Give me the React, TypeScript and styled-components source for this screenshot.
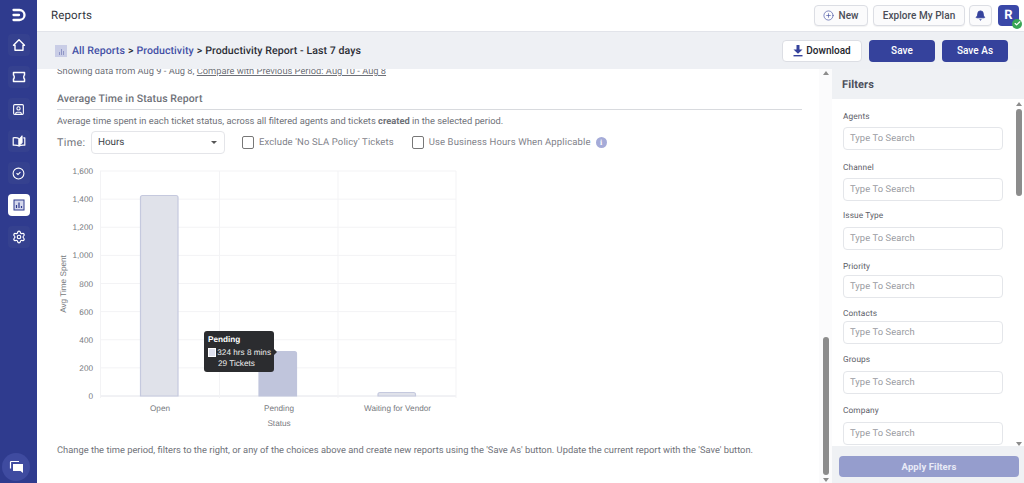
import React from "react";
import styled, { createGlobalStyle } from "styled-components";
import { SquareUser, CircleCheck, Settings, CirclePlus, Bell, Check } from "lucide-react";

const Global = createGlobalStyle`
  html, body { margin: 0; padding: 0; height: 100%; overflow: hidden; background: #fff; }
  * { box-sizing: border-box; }
  body { font-family: Roboto, "Liberation Sans", sans-serif; text-rendering: geometricPrecision; }
`;
const Page = styled.div`display: flex; width: 1024px; height: 483px; overflow: hidden;`;
const Sidebar = styled.nav`
  width: 37px; flex: none; background: #2f3b8e; display: flex; flex-direction: column; align-items: center;
  padding-top: 3px; position: relative;
`;
const Logo = styled.div`height: 23px; display: flex; align-items: center; justify-content: center; margin-bottom: 8px; color: #fff;`;
const NavButton = styled.div<{ $active?: boolean }>`
  width: 22px; height: 22px; border-radius: 4px; margin-bottom: 10px;
  display: flex; align-items: center; justify-content: center;
  background: ${p => (p.$active ? "#fff" : "#35418f")};
  color: ${p => (p.$active ? "#2f3b8e" : "#fff")};
`;
const ChatBubble = styled.div`
  width: 28px; height: 28px; border-radius: 50%; background: #3f4ba0; position: absolute; left: 2px; bottom: 2px;
  display: flex; align-items: center; justify-content: center;
`;
const Body = styled.div`flex: 1; min-width: 0; display: flex; flex-direction: column;`;
const TopBar = styled.header`
  height: 32px; flex: none; display: flex; align-items: center; justify-content: space-between;
  padding: 0 5px 1px 14px; border-bottom: 1px solid #e2e4ea; background: #fff;
`;
const PageName = styled.div`font-size: 11.5px; color: #33363d; letter-spacing: .15px;`;
const TopActions = styled.div`display: flex; align-items: center; gap: 4px;`;
const OutlineButton = styled.button<{ $w: number; $mr?: number }>`
  width: ${p => p.$w}px; height: 21px; border: 1px solid #dcdee4; border-radius: 4px; background: #fbfbfc;
  margin-right: ${p => p.$mr ?? 0}px;
  display: flex; align-items: center; justify-content: center; gap: 4px; padding: 0;
  font: 500 10px Roboto, sans-serif; color: #4a4d57; letter-spacing: .05px; box-shadow: 0 1px 1px #0000000d;
`;
const Avatar = styled.div`
  width: 21px; height: 21px; border-radius: 4px; background: #3a48a8; color: #fff; position: relative; margin-left: 2px;
  font: 700 13px Roboto, sans-serif; display: flex; align-items: center; justify-content: center;
`;
const OnlineBadge = styled.span`
  position: absolute; right: -3px; bottom: -3px; width: 10px; height: 10px; border-radius: 50%; background: #3aa655; color: #fff;
  display: flex; align-items: center; justify-content: center;
`;
const CrumbBar = styled.div`
  height: 37px; flex: none; background: #eef0f4; display: flex; align-items: center; justify-content: space-between;
  padding: 0 16px 0 18px; position: relative; z-index: 1;
`;
const Crumbs = styled.div`display: flex; align-items: center; font: 500 10.6px Roboto, sans-serif; color: #2c2e36; letter-spacing: .05px;`;
const CrumbIcon = styled.span`
  width: 12px; height: 12px; margin-right: 5px; background: #c9cde6; display: flex; align-items: flex-end; justify-content: center; gap: 1px; padding-bottom: 2px;
`;
const CrumbTick = styled.i<{ $h: number }>`display: block; width: 1px; height: ${p => p.$h}px; background: #8f96c6;`;
const CrumbLink = styled.span`color: #4450a6;`;
const CrumbSep = styled.span`margin: 0 3px;`;
const CrumbActions = styled.div`display: flex; gap: 7px; align-items: center;`;
const DownloadButton = styled.button`
  width: 80px; height: 22px; border: 1px solid #dcdee4; border-radius: 4px; background: #fff; padding: 0;
  font: 500 10px Roboto, sans-serif; color: #23252c; display: flex; align-items: center; justify-content: center; gap: 3px;
`;
const PrimaryButton = styled.button`
  width: 66px; height: 22px; border: none; border-radius: 4px; background: #35429c; color: #fff; padding: 0;
  font: 500 10px Roboto, sans-serif; letter-spacing: .05px;
`;
const Work = styled.div`flex: 1; min-height: 0; display: flex;`;
const Main = styled.main`flex: 1; min-width: 0; overflow: hidden; padding: 0 0 0 20px;`;
const DateLine = styled.div`margin-top: -3px; font-size: 9.3px; line-height: 12px; color: #6d7078;`;
const Underlined = styled.span`text-decoration: underline;`;
const SectionTitle = styled.h2`
  margin: 14px 0 0; width: 745px; height: 18px; font: 500 10.5px Roboto, sans-serif; line-height: 14px; color: #6f7279; letter-spacing: .1px;
  border-bottom: 1px solid #d8dade;
`;
const Description = styled.p`margin: 5px 0 0; font-size: 9.34px; line-height: 13px; color: #6f7279;`;
const Controls = styled.div`display: flex; align-items: center; margin-top: 3px; height: 23px;`;
const TimeLabel = styled.span`font-size: 10.8px; color: #74777e; width: 34px; letter-spacing: .3px;`;
const Select = styled.div`
  width: 134px; height: 23px; border: 1px solid #e4e5e9; border-radius: 4px; display: flex; align-items: center; justify-content: space-between;
  padding: 0 6px; font-size: 9.8px; color: #3c3f47; margin-right: 17px;
`;
const Caret = styled.span`width: 0; height: 0; border: 3.5px solid transparent; border-top: 3.5px solid #555; border-bottom: 0; margin-right: 1px;`;
const CheckOption = styled.label<{ $gap: number }>`
  display: flex; align-items: center; gap: 5px; font-size: 9.5px; color: #7f828a; letter-spacing: .12px; margin-right: ${p => p.$gap}px;
`;
const CheckBox = styled.span`width: 12px; height: 13px; border: 1px solid #777; border-radius: 2px; background: #fff;`;
const InfoDot = styled.span`
  width: 11px; height: 11px; border-radius: 50%; background: #a5abd8; color: #fff; display: flex; align-items: center; justify-content: center;
  font: 700 8px/1 "Liberation Serif", serif;
`;
const ChartWrap = styled.div`position: relative; width: 420px; height: 280px; margin: 6px 0 0 -1px;`;
const ChartSvg = styled.svg`display: block; width: 420px; height: 280px;`;
const Tooltip = styled.div`
  position: absolute; left: 148px; top: 171px; width: 70px; height: 41px; border-radius: 3px; background: #2b2c2f; color: #eee;
  padding: 3px 3px 0 4px; font: 8.2px/11px "Liberation Sans", Arial, sans-serif;
  &::after { content: ""; position: absolute; right: -3px; top: 18px; border: 3px solid transparent; border-left-color: #2b2c2f; border-right: 0; }
`;
const TipTitle = styled.div`font-weight: 700; margin-bottom: 2px; color: #fff;`;
const TipRow = styled.div`display: flex; align-items: center; gap: 1px; white-space: nowrap;`;
const TipSwatch = styled.span`width: 9px; height: 9px; background: #dfe1ee; border: 1px solid #fff;`;
const TipSub = styled.div`padding-left: 10px;`;
const FootNote = styled.p`margin: 5px 0 0; font-size: 9.33px; line-height: 12px; color: #6f7279; white-space: nowrap;`;
const Bar = styled.div`
  width: 13px; flex: none; display: flex; flex-direction: column; align-items: center; justify-content: space-between;
  padding: 2px 0 1px; background: #fbfbfc; position: relative;
`;
const FilterBar = styled(Bar)`width: 9px; background: transparent; padding: 0;`;
const ArrowUp = styled.span`width: 0; height: 0; border: 3.5px solid transparent; border-top: 0; border-bottom: 4px solid #8c8c8c;`;
const ArrowDown = styled.span`width: 0; height: 0; border: 3.5px solid transparent; border-bottom: 0; border-top: 4px solid #8c8c8c;`;
const Track = styled.div`flex: 1; width: 100%; display: flex; flex-direction: column; align-items: center; padding: 3px 0;`;
const Thumb = styled.div<{ $h: number; $top?: boolean }>`
  width: 6px; height: ${p => p.$h}px; border-radius: 3px; background: #8c8c8c; margin-top: ${p => (p.$top ? "0" : "auto")};
`;
const Filters = styled.aside`width: 193px; flex: none; display: flex; flex-direction: column; border-left: 1px solid #e4e6ea; margin-left: -1px; background: #fff;`;
const FiltersHead = styled.div`height: 30px; flex: none; background: #eff1f4; padding: 0 10px; display: flex; align-items: center; font: 700 11px Roboto, sans-serif; color: #4c4f5b; letter-spacing: .1px;`;
const FiltersScroll = styled.div`flex: 1; min-height: 0; display: flex; padding: 3px 1px 0 11px; overflow: hidden;`;
const FilterList = styled.div`flex: 1; min-width: 0; padding-top: 10px;`;
const FilterField = styled.div<{ $mb: number }>`margin-bottom: ${p => p.$mb}px;`;
const FieldLabel = styled.div<{ $gap: number }>`font-size: 8.3px; line-height: 11px; color: #5d6068; margin-bottom: ${p => p.$gap}px; letter-spacing: .1px;`;
const SearchBox = styled.div`
  width: 160px; height: 23px; border: 1px solid #e4e6ea; border-radius: 4px; display: flex; align-items: center; padding-left: 6px;
  font-size: 9.4px; color: #999ba1; letter-spacing: .08px;
`;
const ApplyWrap = styled.div`height: 37px; flex: none; background: #eff1f4; padding: 9px 6px 0 7px;`;
const ApplyButton = styled.button`
  width: 180px; height: 21px; border: none; border-radius: 4px; background: #959dcd; color: #e9ebf7; padding: 0;
  font: 700 9.5px Roboto, sans-serif; letter-spacing: .1px;
`;

const filters: [string, number, number][] = [
  ["Agents", 4, 13], ["Channel", 4, 10], ["Issue Type", 5, 12], ["Priority", 2, 11], ["Contacts", 1, 11], ["Groups", 5, 12], ["Company", 5, 0],
];
const yTicks = [0, 200, 400, 600, 800, 1000, 1200, 1400, 1600];
const yOf = (v: number) => 396 - (v / 1600) * 225;

function Chart() {
  const label = { fontFamily: '"Liberation Sans", Arial, sans-serif', fontSize: 8.2, fill: "#777a80" } as const;
  const bars = [
    { x: 140.5, top: 195.5, fill: "#e0e2ea", stroke: "#c5c9de" },
    { x: 259, top: 351.5, fill: "#c0c5dc", stroke: "#c0c5dc" },
    { x: 378, top: 392.5, fill: "#e0e2ea", stroke: "#c5c9de" },
  ];
  return (
    <ChartSvg viewBox="56 160 420 280">
      {yTicks.map(v => (
        <g key={v}>
          <line x1={100} x2={456} y1={yOf(v)} y2={yOf(v)} stroke={v === 0 ? "#e3e4ea" : "#f3f3f5"} />
          <text {...label} x={93} y={yOf(v) + 3} textAnchor="end">{v.toLocaleString("en-US")}</text>
        </g>
      ))}
      {[100.5, 219.5, 338, 456].map(x => <line key={x} x1={x} x2={x} y1={171} y2={398} stroke="#f3f3f5" />)}
      {bars.map(b => (
        <path key={b.x} d={`M${b.x} 396V${b.top + 2}q0-2 2-2H${b.x + 35.5}q2 0 2 2V396z`} fill={b.fill} stroke={b.stroke} strokeWidth={1.2} />
      ))}
      <text {...label} x={160} y={411} textAnchor="middle">Open</text>
      <text {...label} x={279} y={411} textAnchor="middle">Pending</text>
      <text {...label} x={397.5} y={411} textAnchor="middle">Waiting for Vendor</text>
      <text {...label} x={279} y={426} textAnchor="middle">Status</text>
      <text {...label} transform="translate(66 284) rotate(-90)" textAnchor="middle">Avg Time Spent</text>
    </ChartSvg>
  );
}

export default function App() {
  return (
    <Page>
      <Global />
      <Sidebar>
        <Logo>
          <svg width="14" height="14" viewBox="0 0 14 14" fill="none">
            <path d="M1.5 2h6a5 5 0 0 1 0 10h-6" stroke="#fff" strokeWidth="2.3" strokeLinecap="round" />
            <path d="M1.5 7h5.5" stroke="#fff" strokeWidth="2.3" strokeLinecap="round" />
          </svg>
        </Logo>
        <NavButton>
          <svg width="14" height="14" viewBox="0 0 14 14" fill="none" stroke="#fff" strokeWidth="1.4" strokeLinejoin="round">
            <path d="M1.5 7.2 7 1.8l5.5 5.4H11v5H3v-5z" />
          </svg>
        </NavButton>
        <NavButton>
          <svg width="14" height="14" viewBox="0 0 14 14" fill="none" stroke="#fff" strokeWidth="1.5" strokeLinejoin="round">
            <path d="M1.5 2.5h11v2.6c-1 .4-1 3.4 0 3.8v2.6h-11V8.9c1-.4 1-3.4 0-3.8z" />
          </svg>
        </NavButton>
        <NavButton><SquareUser size={13} strokeWidth={2} /></NavButton>
        <NavButton>
          <svg width="14" height="14" viewBox="0 0 14 14" fill="none" stroke="#fff" strokeWidth="1.2" strokeLinejoin="round">
            <path d="M7 4.5C5.600 3.800 3.500 3.600 1.200 3.800v7.400c2.300-.2 4.400 0 5.800.8z" />
            <path d="M7 12c1.400-.8 3.500-1 5.800-.8V3.800h-1.500" />
            <path d="M7.200 11V5.500L10 2v6.500z" fill="#fff" />
          </svg>
        </NavButton>
        <NavButton><CircleCheck size={13} strokeWidth={2} /></NavButton>
        <NavButton $active>
          <svg width="12" height="12" viewBox="0 0 12 12" fill="none">
            <rect x="1" y="1" width="10" height="10" fill="#d5d8ec" stroke="#2f3b8e" />
            <path d="M3.500 9V6M6 9V3.500M8.500 9V7" stroke="#2f3b8e" strokeWidth="1.200" />
          </svg>
        </NavButton>
        <NavButton><Settings size={14} strokeWidth={2} /></NavButton>
        <ChatBubble>
          <svg width="15" height="14" viewBox="0 0 15 14" fill="none">
            <path d="M1.500 8.500V2.200c0-.4.3-.7.7-.7H10" stroke="#fff" strokeWidth="1.200" />
            <path d="M4 4h10v9l-2.500-2H4.600a.6.6 0 0 1-.6-.6z" fill="#fff" />
          </svg>
        </ChatBubble>
      </Sidebar>
      <Body>
        <TopBar>
          <PageName>Reports</PageName>
          <TopActions>
            <OutlineButton $w={54} $mr={1}><CirclePlus size={11} color="#3f4ba0" strokeWidth={1.4} />New</OutlineButton>
            <OutlineButton $w={92}>Explore My Plan</OutlineButton>
            <OutlineButton $w={23} aria-label="Notifications"><Bell size={11} color="#35429c" fill="#35429c" /></OutlineButton>
            <Avatar>R<OnlineBadge><Check size={7} strokeWidth={4} /></OnlineBadge></Avatar>
          </TopActions>
        </TopBar>
        <CrumbBar>
          <Crumbs>
            <CrumbIcon><CrumbTick $h={3} /><CrumbTick $h={6} /><CrumbTick $h={4} /></CrumbIcon>
            <CrumbLink>All Reports</CrumbLink>
            <CrumbSep>{">"}</CrumbSep>
            <CrumbLink>Productivity</CrumbLink>
            <CrumbSep>{">"}</CrumbSep>
            <span>Productivity Report - Last 7 days</span>
          </Crumbs>
          <CrumbActions>
            <DownloadButton>
              <svg width="10" height="12" viewBox="0 0 10 12" fill="#35429c">
                <path d="M3.500 0h3v4.500H9.500L5 8.800.5 4.500h3z" /><rect x="0.5" y="10" width="9" height="1.400" />
              </svg>
              Download
            </DownloadButton>
            <PrimaryButton>Save</PrimaryButton>
            <PrimaryButton>Save As</PrimaryButton>
          </CrumbActions>
        </CrumbBar>
        <Work>
          <Main>
            <DateLine>Showing data from Aug 9 - Aug 8, <Underlined>Compare with Previous Period: Aug 10 - Aug 8</Underlined></DateLine>
            <SectionTitle>Average Time in Status Report</SectionTitle>
            <Description>Average time spent in each ticket status, across all filtered agents and tickets <b>created</b> in the selected period.</Description>
            <Controls>
              <TimeLabel>Time:</TimeLabel>
              <Select>Hours<Caret /></Select>
              <CheckOption $gap={18}><CheckBox />Exclude 'No SLA Policy' Tickets</CheckOption>
              <CheckOption $gap={5}><CheckBox />Use Business Hours When Applicable</CheckOption>
              <InfoDot>i</InfoDot>
            </Controls>
            <ChartWrap>
              <Chart />
              <Tooltip>
                <TipTitle>Pending</TipTitle>
                <TipRow><TipSwatch />324 hrs 8 mins</TipRow>
                <TipSub>29 Tickets</TipSub>
              </Tooltip>
            </ChartWrap>
            <FootNote>Change the time period, filters to the right, or any of the choices above and create new reports using the 'Save As' button. Update the current report with the 'Save' button.</FootNote>
          </Main>
          <Bar>
            <ArrowUp />
            <Track><Thumb $h={138} /></Track>
            <ArrowDown />
          </Bar>
          <Filters>
            <FiltersHead>Filters</FiltersHead>
            <FiltersScroll>
              <FilterList>
                {filters.map(([name, gap, mb]) => (
                  <FilterField key={name} $mb={mb}>
                    <FieldLabel $gap={gap}>{name}</FieldLabel>
                    <SearchBox>Type To Search</SearchBox>
                  </FilterField>
                ))}
              </FilterList>
              <FilterBar>
                <ArrowUp />
                <Track><Thumb $h={87} $top /></Track>
                <ArrowDown />
              </FilterBar>
            </FiltersScroll>
            <ApplyWrap><ApplyButton>Apply Filters</ApplyButton></ApplyWrap>
          </Filters>
        </Work>
      </Body>
    </Page>
  );
}
